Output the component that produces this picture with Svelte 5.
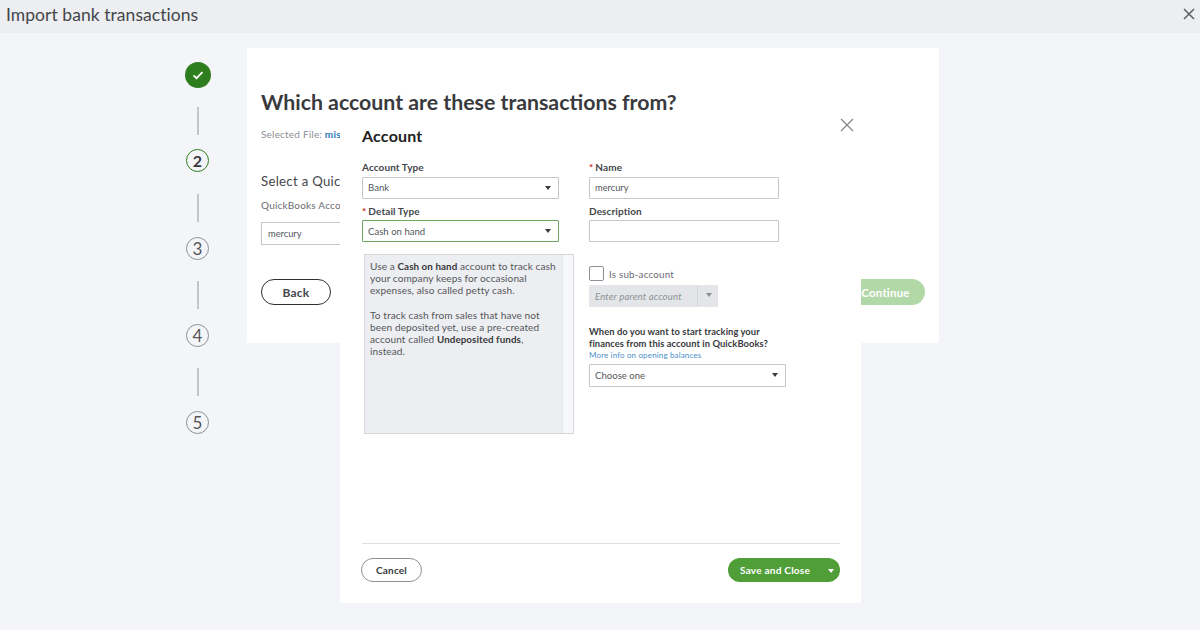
<script>
  const steps = [2, 3, 4, 5];
</script>

<div class="page">
  <header class="top">
    <h1>Import bank transactions</h1>
    <svg class="top-x" viewBox="0 0 12 12" width="12" height="12"><path d="M1 1l10 10M11 1L1 11" /></svg>
  </header>

  <main class="stage">
    <ol class="stepper">
      <li class="dot done">
        <svg viewBox="0 0 12 12" width="12" height="12"><path d="M1.5 6.4l3 2.8 6-6" /></svg>
      </li>
      {#each steps as n}
        <li class="rule"></li>
        <li class="dot" class:current={n === 2}>{n}</li>
      {/each}
    </ol>

    <section class="card">
      <h2>Which account are these transactions from?</h2>
      <p class="file">Selected File: <span class="link">mis</span></p>
      <h3>Select a Quicl</h3>
      <p class="field-label">QuickBooks Acco</p>
      <div class="under-input">mercury</div>
      <div class="card-actions">
        <button class="back">Back</button>
        <button class="continue">Continue</button>
      </div>
    </section>

    <section class="modal">
      <div class="modal-head">
        <h4>Account</h4>
        <svg class="modal-x" viewBox="0 0 14 14" width="14" height="14"><path d="M1 1l12 12M13 1L1 13" /></svg>
      </div>
      <div class="cols">
        <div class="left">
          <label class="lbl">Account Type</label>
          <div class="select">Bank<i class="caret"></i></div>
          <label class="lbl second"><b>*</b>Detail Type</label>
          <div class="select active">Cash on hand<i class="caret"></i></div>
          <div class="help">
            <div class="help-text">
              <p>Use a <strong>Cash on hand</strong> account to track cash your company keeps for occasional expenses, also called petty cash.</p>
              <p>To track cash from sales that have not been deposited yet, use a pre-created account called <strong>Undeposited funds</strong>, instead.</p>
            </div>
            <div class="track"></div>
          </div>
        </div>
        <div class="right">
          <label class="lbl"><b>*</b>Name</label>
          <div class="input">mercury</div>
          <label class="lbl second">Description</label>
          <div class="input"></div>
          <div class="check"><span class="box"></span>Is sub-account</div>
          <div class="parent"><span>Enter parent account</span><em><i class="caret grey"></i></em></div>
          <p class="question">When do you want to start tracking your finances from this account in QuickBooks?</p>
          <span class="more">More info on opening balances</span>
          <div class="select wide">Choose one<i class="caret"></i></div>
        </div>
      </div>
      <footer class="modal-foot">
        <button class="cancel">Cancel</button>
        <button class="save">Save and Close<i class="caret white"></i></button>
      </footer>
    </section>
  </main>
</div>

<style>
  :global(body) {
    margin: 0;
    background: #f4f5f8;
    font-family: Lato, "Open Sans", sans-serif;
    color: #393a3d;
  }
  .page { width: 1200px; height: 630px; overflow: hidden; position: relative; }
  .top {
    height: 33px;
    background: #eceef1;
    display: flex;
    align-items: center;
    justify-content: space-between;
    padding: 0 5px 0 6px;
  }
  .top h1 { margin: 0; font-size: 17.5px; font-weight: 400; letter-spacing: 0.05px; color: #44464a; position: relative; top: -2px; }
  .top-x { fill: none; stroke: #5c5e63; stroke-width: 1.5; margin-top: -5px; }

  .stage { display: flex; align-items: flex-start; padding: 15px 0 0 185px; }
  .stepper { list-style: none; margin: 14px 0 0; padding: 0; width: 62px; display: flex; flex-direction: column; align-items: flex-start; }
  .dot {
    width: 23px; height: 23px; margin-left: 1px;
    border-radius: 50%; border: 1px solid #8d9096; box-sizing: border-box;
    display: flex; align-items: center; justify-content: center;
    font-size: 17px; color: #55575b;
    background: transparent;
  }
  .dot.done { width: 26px; height: 26px; margin: 0 0 -2px; border: 0; background: #2e7d1e; }
  .dot.done svg { fill: none; stroke: #fff; stroke-width: 1.8; }
  .dot.current { border: 1.5px solid #2e7d1e; color: #393a3d; font-weight: 700; font-size: 16px; margin-top: -1px; margin-bottom: 1px; }
  .rule { width: 2px; height: 28px; background: #c4c6cb; margin: 21px 0 15px 12px; }

  .card {
    width: 692px; height: 295px; background: #fff; box-sizing: border-box;
    padding: 40px 14px 0; position: relative;
  }
  .card h2 { margin: 0; font-size: 21.3px; line-height: 28px; font-weight: 700; color: #393a3d; }
  .file { margin: 11px 0 0; font-size: 10px; line-height: 14px; letter-spacing: 0.2px; color: #8d9096; }
  .link { color: #2b7bb9; font-weight: 700; }
  .card h3 { margin: 31px 0 0; font-size: 13.2px; line-height: 18px; font-weight: 400; letter-spacing: 0.3px; color: #44464a; }
  .field-label { margin: 8px 0 0; font-size: 10px; line-height: 14px; letter-spacing: 0.2px; color: #6b6c72; }
  .under-input {
    width: 90px; height: 23px; margin-top: 10px; box-sizing: border-box; border: 1px solid #c4c6cb;
    padding-left: 6px; font-size: 9.3px; line-height: 22px; color: #55575b;
  }
  .card-actions { display: flex; justify-content: space-between; margin-top: 34px; }
  .back {
    width: 70px; height: 26px; border-radius: 13px; border: 1.5px solid #2f3033; background: #fff;
    font: 700 12px Lato, sans-serif; letter-spacing: 0.2px; color: #44464a; padding: 0;
  }
  .continue {
    width: 110px; height: 26px; border: 0; border-radius: 13px; background: #b2d8a8; color: #fff;
    font: 700 11.5px Lato, sans-serif; letter-spacing: 0.2px; padding: 0 0 0 31px;
  }

  .modal {
    position: absolute; left: 340px; top: 118px; width: 521px; height: 485px;
    background: #fff; box-sizing: border-box; padding: 0 21px 0 22px;
    display: flex; flex-direction: column;
  }
  .modal-head { height: 43px; flex: none; display: flex; justify-content: space-between; align-items: flex-start; }
  .modal-head h4 { margin: 7px 0 0; font-size: 16px; line-height: 21px; font-weight: 700; letter-spacing: 0.2px; color: #222; }
  .modal-x { fill: none; stroke: #85878c; stroke-width: 1.3; margin: 0 -14px 0 0; }
  .cols { display: flex; flex: 1; }
  .left { width: 227px; flex: none; }
  .right { width: 251px; flex: none; }
  .lbl { display: block; font-size: 10px; line-height: 13px; font-weight: 700; letter-spacing: 0.1px; color: #44464a; margin-bottom: 3px; }
  .lbl b { color: #d0312d; margin-right: 2px; }
  .lbl.second { margin-top: 6px; margin-bottom: 2px; }
  .select, .input {
    box-sizing: border-box; width: 197px; height: 22px; border: 1px solid #c4c6cb; border-radius: 1px;
    background: #fff; padding-left: 5px; font-size: 9.6px; line-height: 20px; color: #55575b;
    position: relative;
  }
  .input { width: 189.5px; font-size: 9.3px; }
  .select.active { border-color: #6ba85e; line-height: 21px; }
  .select.wide { width: 196.5px; height: 23px; margin-top: 3px; line-height: 21px; }
  .caret {
    position: absolute; right: 7px; top: 8px; width: 0; height: 0;
    border-left: 3.5px solid transparent; border-right: 3.5px solid transparent; border-top: 4px solid #393a3d;
  }
  .help {
    width: 210px; height: 180px; margin: 12px 0 0 2px; display: flex; box-sizing: border-box;
    border: 1px solid #d4d6da; background: #eceef1;
  }
  .help-text { flex: 1; padding: 6px 4px 0 5px; font-size: 10.1px; line-height: 11.8px; letter-spacing: 0.08px; color: #55575b; }
  .help-text p { margin: 0 0 14px; }
  .help-text strong { color: #393a3d; font-weight: 700; font-size: 9.8px; }
  .track { width: 10px; background: #f7f8fa; border-left: 1px solid #e3e5e8; }

  .check { display: flex; align-items: center; gap: 5px; margin-top: 24px; font-size: 9.8px; letter-spacing: 0.2px; color: #6b6c72; height: 15px; }
  .box { width: 13px; height: 13px; border: 1px solid #8d9096; border-radius: 2px; background: #fff; }
  .parent {
    width: 129px; height: 22px; margin-top: 4px; display: flex; background: #e3e5e8; border-radius: 1px;
    font-size: 9.5px; line-height: 23px; font-style: italic; letter-spacing: 0.2px; color: #8d9096;
  }
  .parent span { flex: 1; padding-left: 6px; }
  .parent em { width: 20px; position: relative; border-left: 1px solid #d4d6da; display: block; }
  .caret.grey { border-top-color: #8d9096; right: 6px; }
  .question { margin: 19px 0 0; width: 200px; font-size: 9.4px; line-height: 11.5px; font-weight: 700; letter-spacing: 0.05px; color: #393a3d; }
  .more { display: block; margin-top: 1px; font-size: 8px; line-height: 11px; letter-spacing: 0.15px; color: #4a90c8; }

  .modal-foot {
    flex: none; height: 60px; border-top: 1px solid #dcdee1; box-sizing: border-box;
    display: flex; align-items: flex-start; justify-content: space-between; padding-top: 14px;
  }
  .cancel {
    width: 61px; height: 24px; border-radius: 12px; border: 1px solid #8d9096; background: #fff; padding: 0;
    font: 700 10px Lato, sans-serif; letter-spacing: 0.2px; color: #393a3d; margin-left: -1px;
  }
  .save {
    width: 112px; height: 24px; border-radius: 12px; border: 0; background: #4f9e37; color: #fff; position: relative;
    font: 700 10.1px Lato, sans-serif; letter-spacing: 0.2px; text-align: left; padding: 0 0 0 12px;
  }
  .caret.white { border-top-color: #fff; right: 6px; top: 11px; }
</style>
